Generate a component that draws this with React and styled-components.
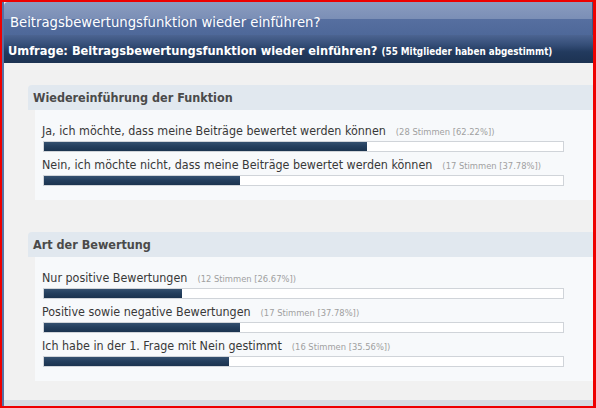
import React from "react";
import styled, { createGlobalStyle } from "styled-components";

const GlobalStyle = createGlobalStyle`
  html, body { margin: 0; padding: 0; background: #fff; overflow: hidden; }
  * { box-sizing: border-box; }
`;

const FONT = `"DejaVu Sans Condensed", "DejaVu Sans", sans-serif`;

const Frame = styled.div`
  width: 596px;
  height: 408px;
  border-style: solid;
  border-color: #ee0000;
  border-width: 2px 3px 2px 2px;
  overflow: hidden;
  display: flex;
  font-family: ${FONT};
`;

const Panel = styled.div`
  flex: 1;
  display: flex;
  flex-direction: column;
  background: #f1f1f1;
  border-left: 2px solid #5870a4;
  overflow: hidden;
`;

const TitleBar = styled.div`
  height: 33px;
  flex: none;
  padding: 6px 0 0 6px;
  line-height: 27px;
  color: #fff;
  font-size: 14.7px;
  white-space: nowrap;
  border-top-left-radius: 4px;
  border-right: 1px solid #3f5685;
  background: linear-gradient(
    to bottom,
    #8a9cc0 0%,
    #7b8fb6 50%,
    #566fa0 53%,
    #4e6899 100%
  );
`;

const PollBar = styled.div`
  height: 28px;
  flex: none;
  padding: 4px 0 0 4px;
  line-height: 24px;
  color: #fff;
  font-size: 12.7px;
  font-weight: bold;
  white-space: nowrap;
  background: linear-gradient(
    to bottom,
    #4c6491 0%,
    #354e78 35%,
    #223a5e 60%,
    #1c3252 100%
  );
`;

const Voters = styled.span`
  font-size: 9.8px;
  font-weight: bold;
`;

const Content = styled.div`
  flex: 1;
  display: flex;
  flex-direction: column;
  gap: 32px;
  padding: 22px 0 0 24px;
`;

const Section = styled.section`
  display: flex;
  flex-direction: column;
`;

const SectionHead = styled.div`
  height: 25px;
  line-height: 26px;
  padding-left: 5px;
  background: #e1e8ef;
  border-top-left-radius: 4px;
  color: #4a4a4a;
  font-size: 12.5px;
  font-weight: bold;
`;

const SectionBody = styled.div`
  margin-left: 7px;
  background: #f7f9fb;
  padding: 13px 0 14px 8px;
  display: flex;
  flex-direction: column;
  gap: 5px;
`;

const Option = styled.div`
  display: flex;
  flex-direction: column;
  gap: 2px;
`;

const Label = styled.div`
  height: 16px;
  line-height: 16px;
  color: #383838;
  font-size: 12.4px;
  white-space: nowrap;
  margin-left: -1px;
`;

const Count = styled.span`
  margin-left: 10px;
  color: #a0a0a0;
  font-size: 9.3px;
`;

const Bar = styled.div`
  width: 521px;
  height: 11px;
  background: #fff;
  border: 1px solid #d0d4d9;
`;

const Fill = styled.div`
  height: 100%;
  background: linear-gradient(to bottom, #34506f 0%, #243f5e 45%, #1b334f 100%);
`;

const Footer = styled.div`
  height: 6px;
  flex: none;
  margin-top: auto;
  background: #d6dce2;
`;

const sections = [
  {
    title: "Wiedereinführung der Funktion",
    options: [
      { label: "Ja, ich möchte, dass meine Beiträge bewertet werden können", votes: 28, pct: 62.22 },
      { label: "Nein, ich möchte nicht, dass meine Beiträge bewertet werden können", votes: 17, pct: 37.78 },
    ],
  },
  {
    title: "Art der Bewertung",
    options: [
      { label: "Nur positive Bewertungen", votes: 12, pct: 26.67 },
      { label: "Positive sowie negative Bewertungen", votes: 17, pct: 37.78 },
      { label: "Ich habe in der 1. Frage mit Nein gestimmt", votes: 16, pct: 35.56 },
    ],
  },
];

export default function App() {
  return (
    <>
      <GlobalStyle />
      <Frame>
        <Panel>
          <TitleBar>Beitragsbewertungsfunktion wieder einführen?</TitleBar>
          <PollBar>
            Umfrage: Beitragsbewertungsfunktion wieder einführen?{" "}
            <Voters>(55 Mitglieder haben abgestimmt)</Voters>
          </PollBar>
          <Content>
            {sections.map((s) => (
              <Section key={s.title}>
                <SectionHead>{s.title}</SectionHead>
                <SectionBody>
                  {s.options.map((o) => (
                    <Option key={o.label}>
                      <Label>
                        {o.label}
                        <Count>
                          ({o.votes} Stimmen [{o.pct.toFixed(2)}%])
                        </Count>
                      </Label>
                      <Bar>
                        <Fill style={{ width: `${o.pct}%` }} />
                      </Bar>
                    </Option>
                  ))}
                </SectionBody>
              </Section>
            ))}
          </Content>
          <Footer />
        </Panel>
      </Frame>
    </>
  );
}
